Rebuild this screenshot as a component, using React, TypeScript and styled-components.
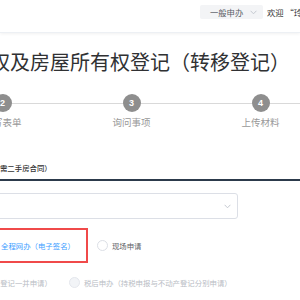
import React from 'react';
import styled, { createGlobalStyle } from 'styled-components';

const Global = createGlobalStyle`
  html, body { margin: 0; padding: 0; background: #fff; }
  body {
    width: 300px; height: 300px; overflow: hidden;
    font-family: "Noto Sans CJK SC", "Noto Sans", sans-serif;
    color: #303133;
  }
`;

const Header = styled.header`
  height: 33px;
  box-sizing: border-box;
  background: #fff;
  border-bottom: 1px solid #edf0f4;
  box-shadow: 0 1px 3px rgba(0, 0, 0, 0.06);
  display: flex;
  align-items: flex-start;
  padding: 5px 0 0 200px;
  white-space: nowrap;
  overflow: hidden;
`;

const ModeSelect = styled.div`
  flex: none;
  width: 63px;
  height: 14px;
  box-sizing: border-box;
  background: #f3f4f6;
  border-radius: 2px;
  display: flex;
  align-items: center;
  justify-content: space-between;
  padding: 0 6px 0 10px;
  font-size: 8.3px;
  color: #5a5e66;
`;

const Welcome = styled.span`
  flex: none;
  margin-left: 4px;
  font-size: 8.3px;
  line-height: 14px;
  color: #333;
`;

const Main = styled.main`
  width: 300px;
  overflow: hidden;
`;

const Title = styled.h1`
  margin: 15px 0 0 -170px;
  font-size: 20px;
  line-height: 28px;
  font-weight: 400;
  color: #303133;
  white-space: nowrap;
`;

const Steps = styled.ol`
  list-style: none;
  display: flex;
  margin: 18px 0 0 -191px;
  padding: 0;
`;

const Step = styled.li`
  flex: none;
  width: 129px;
  position: relative;
  display: flex;
  flex-direction: column;
  align-items: center;
  &::before {
    content: "";
    position: absolute;
    left: 0;
    right: 0;
    top: 8.5px;
    height: 1px;
    background: #d9d9d9;
  }
`;

const StepDot = styled.span`
  position: relative;
  width: 18px;
  height: 18px;
  border-radius: 50%;
  background: #8e8e8e;
  color: #fff;
  font-size: 9px;
  font-weight: 700;
  font-family: "Liberation Sans", Arial, sans-serif;
  display: flex;
  align-items: center;
  justify-content: center;
`;

const StepLabel = styled.span`
  margin-top: 4px;
  font-size: 9.5px;
  line-height: 12px;
  color: #999;
  white-space: nowrap;
`;

const SectionHead = styled.h2`
  margin: 35px 0 0 0;
  padding: 0 0 6px 0;
  border-bottom: 2px solid #2c3a4b;
  font-size: 7.4px;
  line-height: 10px;
  font-weight: 500;
  color: #333;
  white-space: nowrap;
  text-indent: -37px;
`;

const SelectBox = styled.div`
  margin: 12px 0 0 -20px;
  width: 258px;
  height: 26px;
  box-sizing: border-box;
  border: 1px solid #dcdfe6;
  border-radius: 3px;
  display: flex;
  align-items: center;
  justify-content: flex-end;
  padding-right: 6px;
`;

const RadioRow = styled.div<{ $offset: number; $top: number }>`
  display: flex;
  align-items: center;
  margin: ${p => p.$top}px 0 0 ${p => p.$offset}px;
  white-space: nowrap;
`;

const Highlight = styled.div`
  flex: none;
  height: 35px;
  box-sizing: border-box;
  border: 2px solid #f04a4a;
  display: flex;
  align-items: center;
  padding: 0 11px 0 10px;
`;

const RadioItem = styled.label<{ $gap?: number }>`
  flex: none;
  display: flex;
  align-items: center;
  margin-left: ${p => p.$gap ?? 0}px;
`;

const RadioCircle = styled.span<{ $state: 'on' | 'off' | 'disabled' }>`
  flex: none;
  width: 11px;
  height: 11px;
  box-sizing: border-box;
  border-radius: 50%;
  border: 1px solid ${p => (p.$state === 'on' ? '#409eff' : p.$state === 'disabled' ? '#e4e7ed' : '#dcdfe6')};
  background: ${p => (p.$state === 'on' ? '#409eff' : p.$state === 'disabled' ? '#f2f4f7' : '#fff')};
  display: flex;
  align-items: center;
  justify-content: center;
  &::after {
    content: "";
    width: 4px;
    height: 4px;
    border-radius: 50%;
    background: #fff;
    display: ${p => (p.$state === 'on' ? 'block' : 'none')};
  }
`;

const RadioText = styled.span<{ $state: 'on' | 'off' | 'disabled' }>`
  margin-left: 4px;
  font-size: 7.4px;
  line-height: 11px;
  color: ${p => (p.$state === 'on' ? '#409eff' : p.$state === 'disabled' ? '#b8bcc4' : '#606266')};
`;

const Chevron = ({ color }: { color: string }) => (
  <svg width="7" height="5" viewBox="0 0 7 5" fill="none">
    <path d="M0.6 0.8 L3.5 3.8 L6.4 0.8" stroke={color} strokeWidth="0.9" />
  </svg>
);

const steps = ['选择事项', '填写表单', '询问事项', '上传材料', '提交申请'];

export default function App() {
  return (
    <>
      <Global />
      <Header>
        <ModeSelect>
          一般申办
          <Chevron color="#c0c4cc" />
        </ModeSelect>
        <Welcome>欢迎 “玲珑”</Welcome>
      </Header>
      <Main>
        <Title>国有建设用地使用权及房屋所有权登记（转移登记）</Title>
        <Steps>
          {steps.map((s, i) => (
            <Step key={s}>
              <StepDot>{i + 1}</StepDot>
              <StepLabel>{s}</StepLabel>
            </Step>
          ))}
        </Steps>
        <SectionHead>交易信息（需二手房合同）</SectionHead>
        <SelectBox>
          <Chevron color="#c0c4cc" />
        </SelectBox>
        <RadioRow $offset={-26} $top={9}>
          <Highlight>
            <RadioItem>
              <RadioCircle $state="on" />
              <RadioText $state="on">全程网办（电子签名）</RadioText>
            </RadioItem>
          </Highlight>
          <RadioItem $gap={9}>
            <RadioCircle $state="off" />
            <RadioText $state="off">现场申请</RadioText>
          </RadioItem>
        </RadioRow>
        <RadioRow $offset={-74} $top={14}>
          <RadioItem>
            <RadioCircle $state="disabled" />
            <RadioText $state="disabled">合并申办（税费与登记一并申请）</RadioText>
          </RadioItem>
          <RadioItem $gap={17}>
            <RadioCircle $state="disabled" />
            <RadioText $state="disabled">税后申办（持税申报与不动产登记分别申请）</RadioText>
          </RadioItem>
        </RadioRow>
      </Main>
    </>
  );
}
